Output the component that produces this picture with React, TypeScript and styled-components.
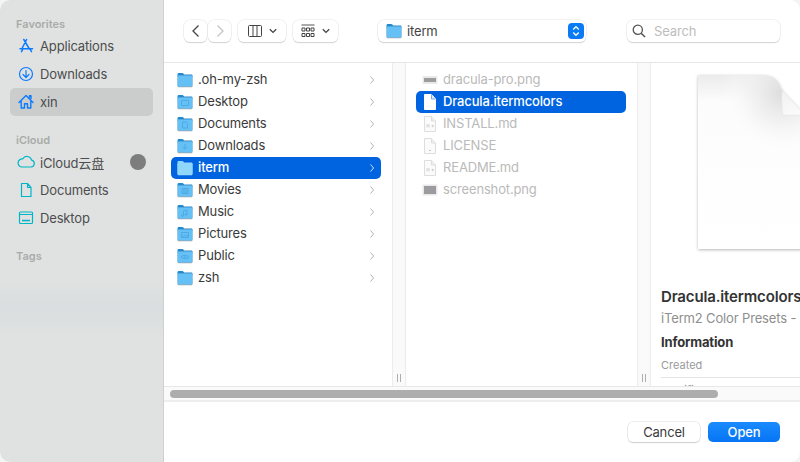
import { createGlobalStyle } from "styled-components";
import styled from "styled-components";

const GlobalStyle = createGlobalStyle`
    html, body {
        margin: 0;
        padding: 0;
        background: #f4f4f4;
    }
    * {
        box-sizing: border-box;
    }
`;

const fontStack = `Inter, "Noto Sans CJK SC", sans-serif`;

const Dialog = styled.div`
    width: 800px;
    height: 462px;
    display: flex;
    overflow: hidden;
    border-radius: 10px;
    background: #fff;
    font-family: ${fontStack};
    font-size: 13px;
    letter-spacing: -0.15px;
    color: #3a3a3a;
`;

const Sidebar = styled.aside`
    width: 164px;
    flex: none;
    padding: 16px 10px 0;
    display: flex;
    flex-direction: column;
    gap: 16px;
    border-right: 1px solid #cfd0d0;
    background: linear-gradient(
        180deg,
        #e0e2e1 0,
        #e0e2e1 280px,
        #dadee0 305px,
        #dcdfe0 320px,
        #e0e2e1 335px
    );
`;

const SideSection = styled.section`
    display: flex;
    flex-direction: column;
`;

const SideHeading = styled.div`
    height: 16px;
    line-height: 16px;
    padding-left: 6px;
    font-size: 11px;
    font-weight: 600;
    letter-spacing: 0;
    color: #a9abaa;
`;

const SideRow = styled.div<{ $active?: boolean }>`
    height: 28px;
    display: flex;
    align-items: center;
    gap: 4px;
    padding: 0 7px 0 6px;
    border-radius: 5px;
    color: #4c4d4d;
    background: ${props => (props.$active ? "#cbcdcc" : "transparent")};
`;

const SideIcon = styled.svg`
    width: 20px;
    height: 20px;
    flex: none;
    fill: none;
    stroke-width: 1.2;
    stroke-linecap: round;
    stroke-linejoin: round;
`;

const SideLabel = styled.span`
    flex: 1;
    white-space: nowrap;
`;

const SyncDot = styled.span`
    width: 16px;
    height: 16px;
    border-radius: 50%;
    background: #7d7d7d;
`;

const Main = styled.div`
    flex: 1;
    min-width: 0;
    display: flex;
    flex-direction: column;
`;

const Toolbar = styled.header`
    height: 63px;
    flex: none;
    padding: 20px;
    display: flex;
    align-items: flex-start;
    border-bottom: 1px solid #e6e6e6;
`;

const ControlBox = styled.div`
    height: 22px;
    display: flex;
    align-items: center;
    justify-content: center;
    background: #fff;
    border-radius: 6px;
    box-shadow: 0 0 0 0.5px #e6e6e6, 0 1px 1px #c4c4c4;
`;

const NavButton = styled(ControlBox)`
    width: 23px;
`;

const NavGroup = styled.div`
    display: flex;
    gap: 1px;
`;

const ViewButton = styled(ControlBox)<{ $width: number }>`
    width: ${props => props.$width}px;
    margin-left: 7px;
    gap: 7px;
`;

const PathPopup = styled(ControlBox)`
    width: 208px;
    margin-left: 40px;
    padding: 0 2px 0 8px;
    justify-content: flex-start;
    gap: 5px;
`;

const PathLabel = styled.span`
    flex: 1;
    color: #444;
`;

const Stepper = styled.div`
    width: 16px;
    height: 16px;
    border-radius: 4px;
    display: flex;
    align-items: center;
    justify-content: center;
    background: #0a7bf5;
`;

const SearchBox = styled(ControlBox)`
    width: 153px;
    margin-left: 41px;
    padding-left: 5px;
    justify-content: flex-start;
    gap: 8px;
    color: #bdbdbd;
`;

const Browser = styled.div`
    flex: 1;
    min-height: 0;
    display: flex;
    overflow: hidden;
`;

const Column = styled.div<{ $width: number; $left: number; $right: number }>`
    width: ${props => props.$width}px;
    flex: none;
    padding: 6px ${props => props.$right}px 0 ${props => props.$left}px;
    display: flex;
    flex-direction: column;
`;

const FileRow = styled.div<{ $selected?: boolean; $dim?: boolean }>`
    height: 22px;
    flex: none;
    display: flex;
    align-items: center;
    gap: 5px;
    padding: 0 6px;
    border-radius: 5px;
    white-space: nowrap;
    background: ${props => (props.$selected ? "#0064e1" : "transparent")};
    color: ${props => (props.$selected ? "#fff" : props.$dim ? "#bababa" : "#3a3a3a")};
    font-weight: ${props => (props.$selected ? 500 : 400)};
`;

const FileName = styled.span`
    flex: 1;
    padding-bottom: 2px;
`;

const Gutter = styled.div`
    width: 14px;
    flex: none;
    display: flex;
    align-items: flex-end;
    justify-content: center;
    gap: 2px;
    padding-bottom: 4px;
    background: #fafafa;
    border-left: 1px solid #ececec;
    border-right: 1px solid #ececec;
`;

const GripLine = styled.span`
    width: 1px;
    height: 8px;
    background: #adadad;
`;

const Preview = styled.div`
    flex: 1;
    min-width: 0;
    overflow: hidden;
    display: flex;
    flex-direction: column;
    padding: 0 0 0 10px;
`;

const PreviewArt = styled.svg`
    width: 139px;
    height: 190px;
    flex: none;
    display: block;
`;

const PreviewTitle = styled.div`
    margin-top: 36px;
    width: 200px;
    line-height: 16px;
    font-size: 15px;
    font-weight: 600;
    color: #333;
    white-space: nowrap;
`;

const PreviewKind = styled.div`
    margin-top: 5px;
    width: 200px;
    line-height: 16px;
    color: #8e8e8e;
    white-space: nowrap;
`;

const SectionTitle = styled.div`
    margin-top: 8px;
    line-height: 16px;
    font-weight: 700;
    color: #333;
`;

const InfoRow = styled.div`
    flex: none;
    width: 139px;
    height: 21px;
    margin-top: 7px;
    padding-top: 1px;
    border-bottom: 1px solid #e4e4e4;
    font-size: 11px;
    line-height: 14px;
    letter-spacing: 0;
    color: #9a9a9a;
`;

const InfoRowNext = styled(InfoRow)`
    margin-top: 0;
    padding-top: 5px;
    border-bottom: none;
`;

const ScrollTrack = styled.div`
    height: 16px;
    flex: none;
    padding: 3px 82px 0 6px;
    background: #fafafa;
    border-top: 1px solid #e8e8e8;
    border-bottom: 2px solid #eeeeee;
`;

const ScrollThumb = styled.div`
    height: 8px;
    border-radius: 4px;
    background: #adadad;
`;

const Footer = styled.footer`
    height: 60px;
    flex: none;
    display: flex;
    justify-content: flex-end;
    align-items: flex-start;
    gap: 8px;
    padding: 20px 20px 0 0;
`;

const CancelButton = styled.button`
    width: 72px;
    height: 20px;
    padding: 0;
    border: none;
    border-radius: 5px;
    font: inherit;
    letter-spacing: inherit;
    color: #3a3a3a;
    background: #fff;
    box-shadow: 0 0 0 0.5px #dcdcdc, 0 1px 1px #c4c4c4;
`;

const OpenButton = styled.button`
    width: 72px;
    height: 20px;
    padding: 0;
    border: none;
    border-radius: 5px;
    font: inherit;
    font-weight: 500;
    letter-spacing: inherit;
    color: #fff;
    background: linear-gradient(180deg, #1a8bff, #0674f5);
`;

type FolderGlyph = "none" | "screen" | "doc" | "down" | "film" | "note" | "photo" | "share";

function Folder({ glyph = "none", selected = false }: { glyph?: FolderGlyph; selected?: boolean }) {
    const mark = "#4ea9e4";
    return (
        <svg width="16" height="16" viewBox="0 0 16 16" style={{ flex: "none" }}>
            <path d="M.5 3.2V2.4C.5 1.6 1 1 1.8 1h3.4c.6 0 .9.2 1.2.6l.7.9h7.2c.8 0 1.2.5 1.2 1.2V5H.5z" fill={selected ? "#8fd4fb" : "#2389cf"} />
            <rect x="0.5" y="3.8" width="15" height="11.4" rx="1.2" fill={selected ? "#9ad9fb" : "#9aa4aa"} />
            <rect x="0.5" y="3.6" width="15" height="11" rx="1" fill={selected ? "#8fd6fb" : "#65c0f6"} />
            {glyph === "screen" && <rect x="4.5" y="6.5" width="7" height="5" rx="0.6" fill="none" stroke={mark} />}
            {glyph === "doc" && <path d="M5.5 6h3.5l1.5 1.5V12h-5z" fill="none" stroke={mark} />}
            {glyph === "down" && <path d="M8 6v5M5.8 9L8 11.2 10.2 9" fill="none" stroke={mark} />}
            {glyph === "film" && <path d="M5 6.5h6v5H5zM7 6.5v5M9 6.5v5" fill="none" stroke={mark} />}
            {glyph === "note" && <path d="M6.5 11V7l3.5-.8v4M6.5 11a1 1 0 1 1-1-.6M10 10a1 1 0 1 1-1-.6" fill="none" stroke={mark} />}
            {glyph === "photo" && <path d="M4.5 6.5h7v5h-7zM5 11l2-2 1.5 1.2 1.3-1 1.5 1.8" fill="none" stroke={mark} />}
            {glyph === "share" && <path d="M4 9c1.5-2 6.500-2 8 0-1.500 2-6.500 2-8 0zM8 8v2" fill="none" stroke={mark} />}
        </svg>
    );
}

function Chevron({ color = "#b4b4b4" }: { color?: string }) {
    return (
        <svg width="6" height="10" viewBox="0 0 6 10" style={{ flex: "none" }}>
            <path d="M1.500 1.500L4.600 5 1.500 8.500" fill="none" stroke={color} strokeWidth="1" />
        </svg>
    );
}

function ImageThumb({ tall = false }: { tall?: boolean }) {
    return (
        <svg width="16" height="16" viewBox="0 0 16 16" style={{ flex: "none" }}>
            <rect x="0.500" y={tall ? 2.500 : 4} width="15" height={tall ? 11 : 8} rx="1" fill="#e9e9e9" />
            <rect x="2" y={tall ? 4 : 6} width="12" height={tall ? 8 : 4} fill="#9b9ba0" />
        </svg>
    );
}

function DocThumb({ kind }: { kind: "white" | "md" | "plain" }) {
    const white = kind === "white";
    return (
        <svg width="16" height="16" viewBox="0 0 16 16" style={{ flex: "none" }}>
            <path
                d="M2.500 .500h7l4 4.500v10.500h-11z"
                fill={white ? "#fff" : "#fbfbfb"}
                stroke={white ? "#fff" : "#dedede"}
            />
            <path d="M9.500 .500v4.500h4" fill={white ? "#dfe9f8" : "#f0f0f0"} stroke={white ? "#0064e1" : "#dedede"} strokeWidth={white ? 0.500 : 1} />
            {kind === "md" && <path d="M5 8.500v3M5 8.500l1 1 1-1v3M9.500 10h2.500M10.750 8.750v2.500" fill="none" stroke="#c4c4c4" strokeWidth="0.700" />}
            {kind === "plain" && <path d="M7 12.500h2" stroke="#bbb" strokeWidth="0.800" />}
        </svg>
    );
}

const parentFolders: { name: string; glyph: FolderGlyph; selected?: boolean }[] = [
    { name: ".oh-my-zsh", glyph: "none" },
    { name: "Desktop", glyph: "screen" },
    { name: "Documents", glyph: "doc" },
    { name: "Downloads", glyph: "down" },
    { name: "iterm", glyph: "none", selected: true },
    { name: "Movies", glyph: "film" },
    { name: "Music", glyph: "note" },
    { name: "Pictures", glyph: "photo" },
    { name: "Public", glyph: "share" },
    { name: "zsh", glyph: "none" },
];

export default function App() {
    return (
        <>
            <GlobalStyle />
            <Dialog>
                <Sidebar>
                    <SideSection>
                        <SideHeading>Favorites</SideHeading>
                        <SideRow>
                            <SideIcon viewBox="0 0 20 20" stroke="#0a7bff">
                                <path d="M10.600 3.500L6 12.500M7.800 3.500l5.600 9.500M4 12.800h12.500M5.500 15.600l1.300-2.400M15.500 15.600L14 13.200" strokeWidth="1.500" />
                            </SideIcon>
                            <SideLabel>Applications</SideLabel>
                        </SideRow>
                        <SideRow>
                            <SideIcon viewBox="0 0 20 20" stroke="#0a7bff">
                                <circle cx="10" cy="10" r="6.500" />
                                <path d="M10 6.500v7M7 10.500l3 3 3-3" />
                            </SideIcon>
                            <SideLabel>Downloads</SideLabel>
                        </SideRow>
                        <SideRow $active>
                            <SideIcon viewBox="0 0 20 20" stroke="#0a7bff">
                                <path d="M3 10.500l7-7 7 7M5.200 9v7h3.300v-4.300h3V16h3.300V9M13.500 5V3.800h1.500v2.700" strokeWidth="1.400" />
                            </SideIcon>
                            <SideLabel>xin</SideLabel>
                        </SideRow>
                    </SideSection>
                    <SideSection>
                        <SideHeading>iCloud</SideHeading>
                        <SideRow>
                            <SideIcon viewBox="0 0 20 20" stroke="#00b5c6">
                                <path d="M5.500 15h9.500a3.500 3.500 0 0 0 .6-6.900A4.800 4.800 0 0 0 6.700 7 4 4 0 0 0 5.500 15z" />
                            </SideIcon>
                            <SideLabel>iCloud云盘</SideLabel>
                            <SyncDot />
                        </SideRow>
                        <SideRow>
                            <SideIcon viewBox="0 0 20 20" stroke="#00b5c6">
                                <path d="M5.500 3.500h6l3.500 4V16.500h-9.500zM11.500 3.500v4h3.500" />
                            </SideIcon>
                            <SideLabel>Documents</SideLabel>
                        </SideRow>
                        <SideRow>
                            <SideIcon viewBox="0 0 20 20" stroke="#00b5c6">
                                <rect x="3.500" y="4" width="13" height="11.500" rx="1" />
                                <path d="M3.500 6.500h13" />
                                <rect x="6" y="11.800" width="8" height="1.500" fill="#00b5c6" stroke="none" />
                            </SideIcon>
                            <SideLabel>Desktop</SideLabel>
                        </SideRow>
                    </SideSection>
                    <SideSection>
                        <SideHeading>Tags</SideHeading>
                    </SideSection>
                </Sidebar>
                <Main>
                    <Toolbar>
                        <NavGroup>
                            <NavButton>
                                <svg width="10" height="14" viewBox="0 0 10 14">
                                    <path d="M7.500 1.500L2 7l5.500 5.500" fill="none" stroke="#444" strokeWidth="1.300" />
                                </svg>
                            </NavButton>
                            <NavButton>
                                <svg width="10" height="14" viewBox="0 0 10 14">
                                    <path d="M2.500 1.500L8 7l-5.500 5.500" fill="none" stroke="#c4c4c4" strokeWidth="1.300" />
                                </svg>
                            </NavButton>
                        </NavGroup>
                        <ViewButton $width={48}>
                            <svg width="14" height="12" viewBox="0 0 14 12">
                                <path d="M1.500.500h11a1 1 0 0 1 1 1v9a1 1 0 0 1-1 1h-11a1 1 0 0 1-1-1v-9a1 1 0 0 1 1-1zM5 .500v11M9 .500v11" fill="none" stroke="#444" />
                            </svg>
                            <svg width="8" height="6" viewBox="0 0 8 6">
                                <path d="M.800 1.200L4 4.400l3.200-3.200" fill="none" stroke="#444" strokeWidth="1.300" />
                            </svg>
                        </ViewButton>
                        <ViewButton $width={45}>
                            <svg width="14" height="14" viewBox="0 0 14 14">
                                <path d="M.500 1h13" stroke="#555" />
                                <path d="M1 4h3v3H1zM5.500 4h3v3h-3zM10 4h3v3h-3zM1 9.500h3v3H1zM5.500 9.500h3v3h-3zM10 9.500h3v3h-3z" fill="none" stroke="#444" strokeWidth="1" />
                            </svg>
                            <svg width="8" height="6" viewBox="0 0 8 6">
                                <path d="M.800 1.200L4 4.400l3.200-3.200" fill="none" stroke="#444" strokeWidth="1.300" />
                            </svg>
                        </ViewButton>
                        <PathPopup>
                            <Folder />
                            <PathLabel>iterm</PathLabel>
                            <Stepper>
                                <svg width="10" height="14" viewBox="0 0 10 14">
                                    <path d="M2.200 5.500L5 2.700l2.800 2.800M2.200 8.500L5 11.300l2.800-2.800" fill="none" stroke="#fff" strokeWidth="1.300" />
                                </svg>
                            </Stepper>
                        </PathPopup>
                        <SearchBox>
                            <svg width="14" height="14" viewBox="0 0 14 14">
                                <circle cx="5.800" cy="5.800" r="4.600" fill="none" stroke="#555" strokeWidth="1.300" />
                                <path d="M9.200 9.200L13 13" stroke="#555" strokeWidth="1.600" />
                            </svg>
                            Search
                        </SearchBox>
                    </Toolbar>
                    <Browser>
                        <Column $width={228} $left={7} $right={11}>
                            {parentFolders.map(folder => (
                                <FileRow key={folder.name} $selected={folder.selected}>
                                    <Folder glyph={folder.glyph} selected={folder.selected} />
                                    <FileName>{folder.name}</FileName>
                                    <Chevron color={folder.selected ? "#cfe2fa" : "#b4b4b4"} />
                                </FileRow>
                            ))}
                        </Column>
                        <Gutter>
                            <GripLine />
                            <GripLine />
                        </Gutter>
                        <Column $width={231} $left={10} $right={11}>
                            <FileRow $dim>
                                <ImageThumb />
                                <FileName>dracula-pro.png</FileName>
                            </FileRow>
                            <FileRow $selected>
                                <DocThumb kind="white" />
                                <FileName>Dracula.itermcolors</FileName>
                            </FileRow>
                            <FileRow $dim>
                                <DocThumb kind="md" />
                                <FileName>INSTALL.md</FileName>
                            </FileRow>
                            <FileRow $dim>
                                <DocThumb kind="plain" />
                                <FileName>LICENSE</FileName>
                            </FileRow>
                            <FileRow $dim>
                                <DocThumb kind="md" />
                                <FileName>README.md</FileName>
                            </FileRow>
                            <FileRow $dim>
                                <ImageThumb tall />
                                <FileName>screenshot.png</FileName>
                            </FileRow>
                        </Column>
                        <Gutter>
                            <GripLine />
                            <GripLine />
                        </Gutter>
                        <Preview>
                            <PreviewArt viewBox="0 0 139 190">
                                <defs>
                                    <linearGradient id="sheetTop" x1="0" y1="12" x2="0" y2="186" gradientUnits="userSpaceOnUse">
                                        <stop offset="0" stopColor="#ebebeb" />
                                        <stop offset="0.150" stopColor="#fcfcfc" />
                                        <stop offset="1" stopColor="#ffffff" />
                                    </linearGradient>
                                    <radialGradient id="curlShade" cx="122" cy="30" r="62" gradientUnits="userSpaceOnUse">
                                        <stop offset="0" stopColor="#dcdcdc" />
                                        <stop offset="0.500" stopColor="#eeeeee" stopOpacity="0.700" />
                                        <stop offset="1" stopColor="#ffffff" stopOpacity="0" />
                                    </radialGradient>
                                    <linearGradient id="flapFill" x1="121" y1="27" x2="135" y2="52" gradientUnits="userSpaceOnUse">
                                        <stop offset="0" stopColor="#f0f0f0" />
                                        <stop offset="1" stopColor="#fbfbfb" />
                                    </linearGradient>
                                    <filter id="sheetShadow" x="-10%" y="-10%" width="120%" height="120%">
                                        <feDropShadow dx="0" dy="1" stdDeviation="1.500" floodColor="#000" floodOpacity="0.280" />
                                    </filter>
                                </defs>
                                <path d="M37 12H102C112 12 118 17 121 27L144 52H150V186H37z" fill="url(#sheetTop)" filter="url(#sheetShadow)" />
                                <path d="M37 12H102C112 12 118 17 121 27L144 52H150V186H37z" fill="url(#curlShade)" />
                                <path d="M121 27C120 37 121 45 122 52H144z" fill="url(#flapFill)" stroke="#e0e0e0" strokeWidth="0.500" />
                            </PreviewArt>
                            <PreviewTitle>Dracula.itermcolors</PreviewTitle>
                            <PreviewKind>iTerm2 Color Presets - </PreviewKind>
                            <SectionTitle>Information</SectionTitle>
                            <InfoRow>Created</InfoRow>
                            <InfoRowNext>Modified</InfoRowNext>
                        </Preview>
                    </Browser>
                    <ScrollTrack>
                        <ScrollThumb />
                    </ScrollTrack>
                    <Footer>
                        <CancelButton>Cancel</CancelButton>
                        <OpenButton>Open</OpenButton>
                    </Footer>
                </Main>
            </Dialog>
        </>
    );
}
